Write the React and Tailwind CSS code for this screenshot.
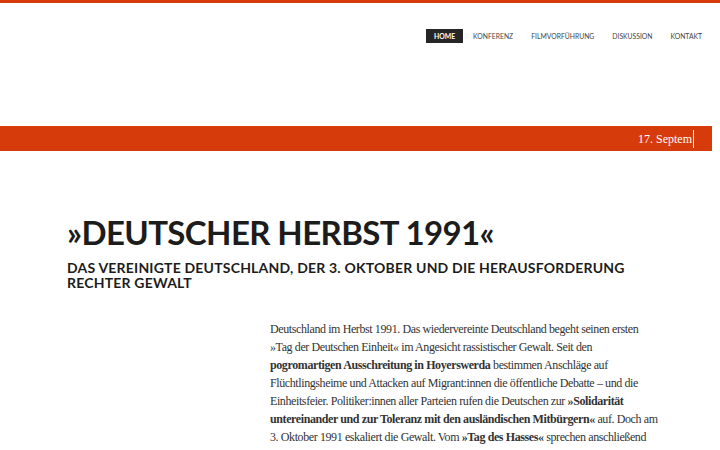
import React from "react";

const nav = ["Home", "Konferenz", "Filmvorführung", "Diskussion", "Kontakt"];

export default function App() {
  return (
    <div className="min-h-screen bg-white" style={{ fontFamily: "Lato, sans-serif" }}>
      <div className="h-[3px] bg-[#d63c0b]" />
      <header className="flex justify-end pt-[26px] pr-[10px] h-[123px]">
        <nav className="flex items-start gap-[2px]">
          {nav.map((n, i) => (
            <a
              key={n}
              className={
                "h-[14px] px-[8px] flex items-center text-[6.8px] uppercase " +
                (i === 0 ? "bg-[#262626] text-white font-bold" : "text-[#444]")
              }
            >
              {n}
            </a>
          ))}
        </nav>
      </header>
      <div className="mr-[8px] h-[25px] bg-[#d63c0b] overflow-hidden flex items-center justify-end pr-[18px]">
        <span className="text-white text-[12px] border-r border-white pr-[1px]" style={{ fontFamily: "'Liberation Serif', serif" }}>
          17. Septem
        </span>
      </div>
      <main className="pl-[67px] pt-[61px]">
        <h1 className="text-[33px] font-bold uppercase text-[#1c1c1c] tracking-[-0.6px] leading-[40px]">
          »Deutscher Herbst 1991«
        </h1>
        <h2 className="mt-[8px] text-[14px] font-bold uppercase text-[#1c1c1c] leading-[15px] tracking-[0.2px] w-[600px]">
          Das vereinigte Deutschland, der 3. Oktober und die Herausforderung rechter Gewalt
        </h2>
        <p
          className="ml-[203px] mt-[30px] w-[391px] text-[12px] tracking-[-0.4px] leading-[18px] text-[#333]"
          style={{ fontFamily: "'Liberation Serif', serif" }}
        >
          Deutschland im Herbst 1991. Das wiedervereinte Deutschland begeht seinen ersten »Tag der Deutschen Einheit« im Angesicht rassistischer Gewalt. Seit den{" "}
          <b>pogromartigen Ausschreitung in Hoyerswerda</b> bestimmen Anschläge auf Flüchtlingsheime und Attacken auf Migrant:innen die öffentliche Debatte – und die Einheitsfeier. Politiker:innen aller Parteien rufen die Deutschen zur{" "}
          <b>»Solidarität untereinander und zur Toleranz mit den ausländischen Mitbürgern«</b> auf. Doch am 3. Oktober 1991 eskaliert die Gewalt. Vom{" "}
          <b>»Tag des Hasses«</b> sprechen anschließend Zeitungen, der hunderte Gewalttaten nach sich zieht. Mehr als 1300 fremdenfeindliche Straftaten, darunter alleine 220 Brandanschläge, zählen
        </p>
      </main>
    </div>
  );
}
